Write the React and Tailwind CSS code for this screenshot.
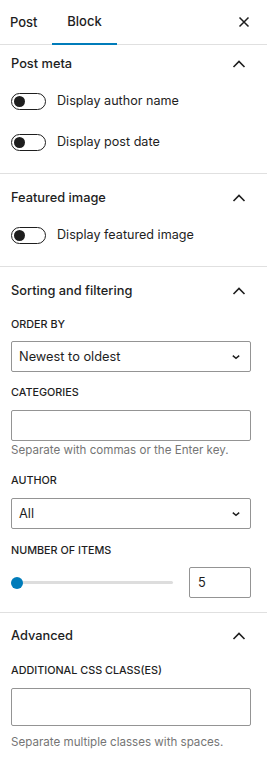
import { useState } from 'react';

const ChevronUp = () => (
  <svg width="24" height="24" viewBox="0 0 24 24" className="text-[#1e1e1e]">
    <path d="M6.5 15 12 9.5l5.5 5.5" fill="none" stroke="currentColor" strokeWidth="1.6" />
  </svg>
);

const SmallChevronDown = () => (
  <svg width="10" height="10" viewBox="0 0 10 10" className="text-[#1e1e1e]">
    <path d="M1.8 3.6 5 6.4l3.2-2.8" fill="none" stroke="currentColor" strokeWidth="1.4" />
  </svg>
);

const Toggle = ({ label }) => (
  <div className="flex items-center h-[18px]">
    <div className="w-[35px] h-[17px] rounded-full border border-[#1e1e1e] bg-white flex items-center px-[2px]">
      <div className="w-[11px] h-[11px] rounded-full bg-[#1e1e1e]"></div>
    </div>
    <span className="ml-[11px] text-[12.6px] text-[#1e1e1e]">{label}</span>
  </div>
);

const PanelTitle = ({ title, className = '' }) => (
  <div className={`flex items-center justify-between h-[38px] ${className}`}>
    <span className="text-[12.8px] font-medium text-[#1e1e1e]">{title}</span>
    <ChevronUp />
  </div>
);

const Label = ({ children }) => (
  <div className="text-[10.8px] font-medium uppercase text-[#1e1e1e] leading-[14px]">{children}</div>
);

const Select = ({ value }) => (
  <div className="flex items-center justify-between h-[31px] border border-[#949494] rounded-[2px] pl-[7px] pr-[9px] bg-white">
    <span className="text-[12.8px] text-[#1e1e1e]">{value}</span>
    <SmallChevronDown />
  </div>
);

const App = () => {
  const [tab] = useState('Block');

  return (
    <div className="w-[267px] h-[768px] bg-white overflow-hidden" style={{ fontFamily: 'Inter, "Noto Sans", sans-serif' }}>
      {/* Header */}
      <div className="flex items-stretch h-[45px] border-b border-[#e0e0e0] pr-[17px]">
        <div className="w-[52px] flex items-center pl-[10px] pt-[1px] text-[13px] font-medium text-[#1e1e1e]">Post</div>
        <div className={`w-[65px] flex items-center justify-center pt-[1px] text-[13px] font-medium text-[#1e1e1e] border-b-2 ${tab === 'Block' ? 'border-[#007cba]' : 'border-transparent'} -mb-px`}>
          Block
        </div>
        <div className="ml-auto flex items-center">
          <svg width="12" height="12" viewBox="0 0 12 12" className="text-[#1e1e1e]">
            <path d="M1.5 1.5l9 9M10.5 1.5l-9 9" stroke="currentColor" strokeWidth="1.5" />
          </svg>
        </div>
      </div>

      <div className="pl-[11px] pr-[16px]">
        {/* Post meta */}
        <div className="border-b border-[#e0e0e0] -ml-[11px] -mr-[16px] pl-[11px] pr-[16px] pb-[22px]">
          <PanelTitle title="Post meta" />
          <div className="mt-[9px] flex flex-col gap-[23px]">
            <Toggle label="Display author name" />
            <Toggle label="Display post date" />
          </div>
        </div>

        {/* Featured image */}
        <div className="border-b border-[#e0e0e0] -ml-[11px] -mr-[16px] pl-[11px] pr-[16px] pb-[22px]">
          <PanelTitle title="Featured image" className="mt-[5px]" />
          <div className="mt-[9px]">
            <Toggle label="Display featured image" />
          </div>
        </div>

        {/* Sorting and filtering */}
        <div className="border-b border-[#e0e0e0] -ml-[11px] -mr-[16px] pl-[11px] pr-[16px] pb-[14px]">
          <PanelTitle title="Sorting and filtering" className="mt-[5px]" />
          <div className="mt-[8px]">
            <Label>Order by</Label>
            <div className="mt-[9px]">
              <Select value="Newest to oldest" />
            </div>
          </div>
          <div className="mt-[14px]">
            <Label>Categories</Label>
            <div className="mt-[10px] h-[31px] border border-[#949494] rounded-[2px] bg-white"></div>
            <p className="mt-[1px] text-[11.6px] leading-[16px] text-[#757575]">Separate with commas or the Enter key.</p>
          </div>
          <div className="mt-[16px]">
            <Label>Author</Label>
            <div className="mt-[10px]">
              <Select value="All" />
            </div>
          </div>
          <div className="mt-[15px]">
            <Label>Number of items</Label>
            <div className="mt-[9px] flex items-center">
              <div className="relative flex-1 h-[31px] flex items-center mr-[16px]">
                <div className="w-full h-[3px] rounded-full bg-[#dddddd]"></div>
                <div className="absolute left-0 w-[12px] h-[12px] rounded-full bg-[#007cba]"></div>
              </div>
              <div className="w-[62px] h-[31px] border border-[#949494] rounded-[2px] flex items-center pl-[8px] text-[12.8px] text-[#1e1e1e]">
                5
              </div>
            </div>
          </div>
        </div>

        {/* Advanced */}
        <div className="pb-[20px]">
          <PanelTitle title="Advanced" className="mt-[4px]" />
          <div className="mt-[9px]">
            <Label>Additional CSS class(es)</Label>
            <div className="mt-[10px] h-[38px] border border-[#949494] rounded-[2px] bg-white"></div>
            <p className="mt-[8px] text-[11.6px] leading-[16px] text-[#757575]">Separate multiple classes with spaces.</p>
          </div>
        </div>
      </div>
    </div>
  );
};

export default App;
